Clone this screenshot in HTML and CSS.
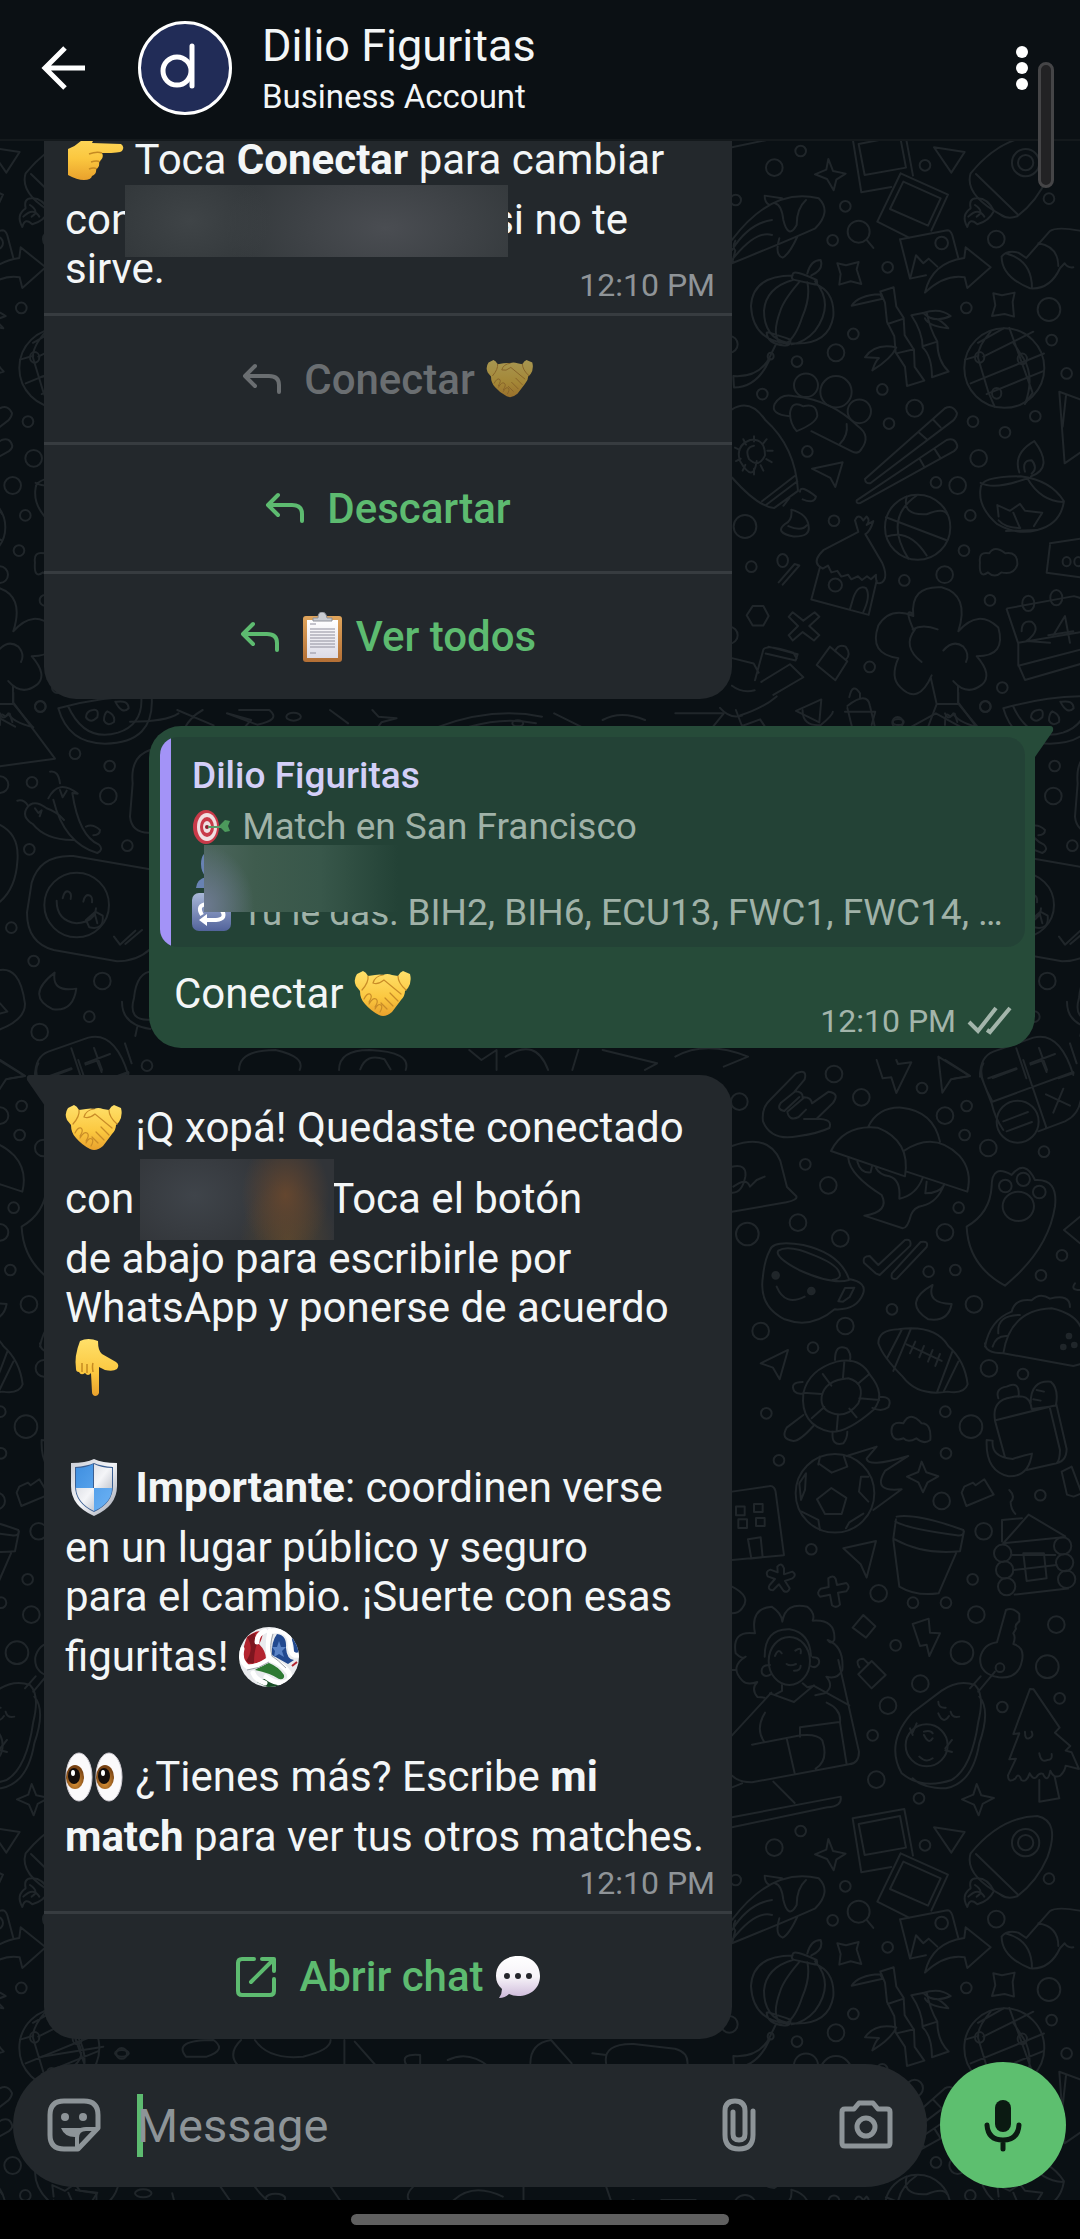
FILE: index.html
```html
<!DOCTYPE html>
<html lang="es">
<head>
<meta charset="utf-8">
<meta name="viewport" content="width=device-width, initial-scale=1">
<title>Dilio Figuritas</title>
<link rel="stylesheet" href="styles.css">
</head>
<body>
<svg class="defs" width="0" height="0" aria-hidden="true">
  <defs>
    <linearGradient id="skin" x1="0" y1="0" x2="0" y2="1"><stop offset="0" stop-color="#ffe06a"/><stop offset=".6" stop-color="#fbc73f"/><stop offset="1" stop-color="#e9a12c"/></linearGradient>
    <linearGradient id="steel" x1="0" y1="0" x2="1" y2="1"><stop offset="0" stop-color="#c9cdd6"/><stop offset=".5" stop-color="#f4f5f8"/><stop offset="1" stop-color="#9aa0ad"/></linearGradient>
    <linearGradient id="blue" x1="0" y1="0" x2="1" y2="1"><stop offset="0" stop-color="#3f8fe0"/><stop offset="1" stop-color="#6db3f5"/></linearGradient>
    <linearGradient id="wood" x1="0" y1="0" x2="0" y2="1"><stop offset="0" stop-color="#e0a55c"/><stop offset="1" stop-color="#b36f35"/></linearGradient>
    <linearGradient id="paper" x1="0" y1="0" x2="0" y2="1"><stop offset="0" stop-color="#ffffff"/><stop offset="1" stop-color="#dcdbe6"/></linearGradient>
    <linearGradient id="talk" x1="0" y1="0" x2="0" y2="1"><stop offset="0" stop-color="#ffffff"/><stop offset=".5" stop-color="#f6f3f8"/><stop offset="1" stop-color="#cdb9da"/></linearGradient>
    <linearGradient id="tile" x1="0" y1="0" x2="0" y2="1"><stop offset="0" stop-color="#a9b8d8"/><stop offset="1" stop-color="#52639b"/></linearGradient>
    <radialGradient id="iris" cx=".5" cy=".7" r=".6"><stop offset="0" stop-color="#e39a3a"/><stop offset="1" stop-color="#7a4312"/></radialGradient>
    <clipPath id="ballclip"><circle cx="30" cy="30" r="30"/></clipPath>
    <symbol id="handshake" viewBox="0 0 58 46">
      <path fill="url(#skin)" d="M3 3 9 0q3 1 5 5l7-1q5-1 8 0 4-2 9 0l6 1q2-4 5-5l7 3q2 8-2 14l-3 3q0 5-4 9L38 41q-7 6-13 3-8-4-14-11-5-5-5-13L2 15Q-1 9 3 3Z"/>
      <path fill="none" stroke="#c98c28" stroke-width="1.2" stroke-linecap="round" d="M14 5q1 6-6 14M44 5q0 7 8 14M29 4q-8 1-10 8 5 2 11-3l17 14M36 22l8 8M31 27l8 8M27 32l6 6M10 28q3-6 6-5 3 2-1 8M15 33q4-7 7-5 3 2-1 8M21 38q3-6 6-4 2 2-1 7"/>
    </symbol>
    <symbol id="reply" viewBox="0 0 40 32"><path fill="none" stroke="currentColor" stroke-width="4" stroke-linecap="round" stroke-linejoin="round" d="M13 3 3 13l10 10M4 13h23q10 0 10 9v7"/></symbol>
  </defs>
</svg>

<header class="topbar">
  <button class="icon-button back" type="button" aria-label="Volver">
    <svg width="56" height="56" viewBox="0 0 56 56"><path fill="none" stroke="#fff" stroke-width="5" d="M49 28H10M29 8 9 28l20 20"/></svg>
  </button>
  <div class="avatar">
    <svg width="88" height="88" viewBox="0 0 88 88" role="img" aria-label="Dilio"><g fill="none" stroke="#fff" stroke-width="5" stroke-linecap="round"><circle cx="36" cy="47" r="14"/><path d="M51 22v40"/></g></svg>
  </div>
  <div class="contact">
    <h1 class="contact-name">Dilio Figuritas</h1>
    <p class="contact-kind">Business Account</p>
  </div>
  <button class="icon-button menu" type="button" aria-label="Más opciones">
    <svg width="20" height="56" viewBox="0 0 20 56"><g fill="#fff"><circle cx="10" cy="12" r="6"/><circle cx="10" cy="28" r="6"/><circle cx="10" cy="44" r="6"/></g></svg>
  </button>
  <span class="scroll-thumb"></span>
</header>

<main class="screen">
  <svg class="wallpaper" aria-hidden="true">
    <defs>
      <g id="doodles">
        <g transform="translate(720 -11) scale(.3333 .3827)" class="flat">
          <ellipse class="m" cx="829" cy="285"/><ellipse class="s" cx="739" cy="465"/><ellipse class="l" cx="987" cy="469"/><ellipse class="s" cx="995" cy="549"/><ellipse class="s" cx="400" cy="533"/><ellipse class="m" cx="348" cy="582"/><ellipse class="s" cx="231" cy="605"/><ellipse class="s" cx="127" cy="690"/><ellipse class="s" cx="487" cy="678"/><ellipse class="m" cx="584" cy="727"/><ellipse class="s" cx="507" cy="767"/><ellipse class="s" cx="759" cy="762"/><ellipse class="s" cx="855" cy="790"/><ellipse class="s" cx="946" cy="748"/><ellipse class="s" cx="1040" cy="636"/><ellipse class="m" cx="776" cy="858"/><ellipse class="s" cx="648" cy="921"/><ellipse class="m" cx="713" cy="929"/><ellipse class="s" cx="751" cy="1007"/><ellipse class="s" cx="262" cy="840"/><ellipse class="s" cx="342" cy="1021"/><ellipse class="l" cx="75" cy="1036"/><ellipse class="s" cx="94" cy="1141"/><ellipse class="s" cx="732" cy="1099"/><ellipse class="s" cx="553" cy="1177"/><ellipse class="m" cx="674" cy="1162"/><ellipse class="s" cx="810" cy="1229"/><ellipse class="s" cx="449" cy="1403"/><ellipse class="s" cx="847" cy="1457"/><ellipse class="s" cx="796" cy="1507"/><ellipse class="s" cx="533" cy="1548"/><ellipse class="m" cx="28" cy="560"/><ellipse class="m" cx="28" cy="1320"/>
          <path d="M218 380q-120 0-125 80 5 90 110 98M218 392q-80 20-86 80 0 70 70 84M240 395q-50 50-60 80-25 60 0 80M262 398q10 40-15 90-20 55-50 70M285 395q60 60 0 130-30 30-70 35M285 402q60 20 55 85-15 80-135 70M218 378q0-16 72 14 5 14-8 11l-62-12q-8-5-2-13ZM140 530q0-5 72 18 0 18-20 15-50-5-52-33ZM262 375q10-35 40-35 10 25-28 40M166 563l-14 25q-30 60-112 55l2 30q70 0 108-75"/><circle cx="152" cy="591" r="9"/>
          <path d="m395 459q20-28 85-30l8 12q-20 4-93 18ZM481 422l40-11 8 50 22 30 3 45 28 38 2 45 29 36-52 14-6-50-28-38-4-42-22-38-6-50ZM503 507l48-14M532 583l50-10M435 594q30-38 94-26-15 30-72 60 10-25 20-32ZM574 484l46-8q10 45 32 77 0 50 34 78l-50 15q0-55-28-78 0-40-34-84ZM608 565l44-12M610 478q50-15 82 8-50 20-82-8ZM615 492q10 20 70 26-20-20-35-24"/>
          <ellipse cx="853" cy="622" rx="120" ry="104"/><path d="M812 527q-40 40-38 68l32 92 18 36M774 556l78-38M790 592l150-65M752 662l220-78M800 690l170-60M868 517l70 170-20 25M735 600l40-10M880 556l30 40q35 50 5 120"/><circle cx="779" cy="594" r="14"/><circle cx="907" cy="598" r="14"/><circle cx="830" cy="688" r="14"/>
          <ellipse cx="258" cy="667" rx="36" ry="31"/><ellipse cx="348" cy="684" rx="47" ry="41"/><ellipse cx="418" cy="735" rx="35" ry="31"/><path d="M210 748q-60-5-46-32 20-30 60-20 110 10 190 78 40 25 10 60-10 15-30 5l-120-52M210 740q5-35 40-18 40-10 42 25-5 20-62 40-20-20-20-47ZM380 768q5 30-20 52"/>
          <path d="M435 912l240-185q25-10 36 13 0 8-10 18l-250 165q-15 2-16-11ZM410 968l270-158q25-8 32 15 0 8-10 14L420 975q-12 2-10-7ZM596 790l24 18M640 757l22 20M598 858l16 24M644 834l18 24"/>
          <path d="M36 730q55-30 100 28 90 70 98 185l-72 45q-50-5-126-80M126 970l98-66M138 980l94-62M240 945q0-20 48 13-5 20-40 7M208 962l-18 20M102 825q-30 5-15 35 30 25 48-10 0-45-45-40-45 15-30 55 40 60 50 0M102 800v14M140 808l-12 13M158 838h-16M155 868l-16-8M130 890l-8-14M102 900v-15M68 890l8-15M48 865l14-6M45 830l14 6M70 808l8 14"/>
          <path d="M276 885l92-17-22 65-15-24ZM214 992q50 12 52 45 5 26-45 25-60-10-25-33 22-10 18-37ZM205 1035q40 15 55-2"/>
          <path d="M295 1138q-15-15 15-40l105-48-10-30q10-20 25 0l10-10q12 10 0 22l20-10q-10 28-24 34l50 74q20 40 0 52-20 10-18-20l-15 12-12-8-15 10-12-10-20 8-10-12-20 5-12-15-18 4-10-18-16 8ZM300 1142l-26 85 172 40 24-90M390 1252l10-30q15-35 38-25 15 20-8 62"/><ellipse cx="346" cy="1189" rx="20" ry="17"/>
          <ellipse cx="593" cy="1038" rx="98" ry="85"/><path d="M498 1012l182 60M560 958q-15 50 60 46 50-18 62 0M590 955q-100 60-25 165M500 1062q70-20 120 50"/>
          <path d="M782 935q0-30 120-30 90 10 130 65-10 60-80 75-60 15-120-15-60-45-50-95ZM782 922q40 20 140-12 40 60 108 62M898 895q-20-50 45-82 60 70-10 92M915 893q-10-30 20-30 20 20 0 35M836 1010l-4-30 38 15 30-18 15 18 52 5-25 35M836 1020q20 20 65 20M880 1000l20 40M858 1048l90-3"/>
          <ellipse cx="188" cy="1125" rx="16" ry="17"/><path d="M176 1182l48-48 14 4-50 50M80 1268l18-24h32l16 26-16 25H98ZM218 1260l32 22 34-22 14 12-30 24 30 24-16 14-34-22-30 22-12-14 28-24-28-24ZM780 1130q-5-30 28-24 15-22 48 0 38-5 36 30-10 28-48 20-20 16-40 0-28 18-24-26Z"/>
          <path d="M290 1398l40-48 52 38-36 50ZM345 1362q10-20 32-12 18 20 0 35M382 1505q60-40 68 0l14 52M382 1510l14 50M388 1482q10-40 32-10v14"/>
          <path d="M635 1425q-40 80-95 30-30-25-5-75-90-10-60-85 35-50 105-25-10-80 85-75 85 20 50 115 60-60 120-10 25 75-65 75 50 50 15 75-45 30-85-10M580 1305q-30-60 0-40M578 1305q30-15 75 0M605 1390q-60-40-20-85M670 1360q30-30 60-10 20 20 8 40M632 1430l18 70h64v-48M650 1500l-25 58M716 1500l55 58M675 1555q0-40 15-22l14-8 8 22"/>
          <path d="M862 1250l200-32 20 5M860 1252l35 90v55l20 40 180-45M895 1340l200-30M895 1400l200-45M905 1310q0-30 30-25 30 20-15 50l70 5M1000 1320l35-50 15 70M985 1320l75-10"/><ellipse cx="925" cy="1237" rx="18" ry="20"/><ellipse cx="1009" cy="1222" rx="18" ry="20"/>
          <path d="M990 1080l90-12M990 1085l-10 72 100 12M1018 684l62 20M1018 684l16 187 50-30M1038 695l-10 80"/><circle cx="1040" cy="1128" r="12"/><circle cx="1075" cy="1128" r="12"/>
          <path d="M130 1358q8-15 90 8l10 15M130 1358l-25 80M145 1350l88 20-6 16-90-18M36 1380l65 14 15 24M124 1442l86-46 40 34-90 46M60 1530q70-20 110-50M36 1452q30 20 68 12M228 1518l76-30-6 60ZM0 1510q30 30 66 20"/>
        </g>
        <g transform="translate(720 919) scale(.3333)">
          <circle class="m" cx="342" cy="42"/><circle class="m" cx="424" cy="112"/><circle class="m" cx="58" cy="125"/><circle class="s" cx="606" cy="84"/><circle class="m" cx="675" cy="167"/><circle class="s" cx="740" cy="138"/><circle class="s" cx="734" cy="225"/><circle class="m" cx="805" cy="264"/><circle class="s" cx="972" cy="275"/><circle class="s" cx="256" cy="313"/><circle class="m" cx="325" cy="376"/><circle class="m" cx="234" cy="488"/><circle class="l" cx="82" cy="522"/><circle class="m" cx="361" cy="535"/><circle class="s" cx="716" cy="443"/><circle class="m" cx="675" cy="517"/><circle class="s" cx="626" cy="635"/><circle class="s" cx="706" cy="630"/><circle class="s" cx="1026" cy="586"/><circle class="s" cx="963" cy="646"/><circle class="m" cx="762" cy="733"/><circle class="s" cx="516" cy="748"/><circle class="m" cx="376" cy="798"/><circle class="m" cx="122" cy="813"/><circle class="s" cx="279" cy="863"/><circle class="m" cx="807" cy="925"/><circle class="s" cx="909" cy="942"/><circle class="s" cx="139" cy="1060"/><circle class="s" cx="676" cy="1055"/><circle class="l" cx="753" cy="1100"/><circle class="s" cx="678" cy="1180"/><circle class="s" cx="177" cy="1201"/><circle class="m" cx="665" cy="1323"/><circle class="s" cx="961" cy="1306"/><circle class="m" cx="791" cy="1414"/><circle class="s" cx="274" cy="1468"/>
          <path d="M150 120l78-80q35-15 26 18l-30 36q25 0 24 18 25-2 28 18l50-35q35 5 12 35l-48 46q50 0 38 28-30 15-95 25-80 15-104-45-5-40 21-64ZM228 92l-45 36q-15 20 10 25l45-42M250 115l-48 40q5 30 34 16l22-22M252 177h50"/>
          <path d="M470 0l18 55 26-3 15 47 45-92-40 5-5-12M655-10l12 108 26-40 56-10ZM780 40l35 90q10 45 35 80M910 0l70 205M815 126l245-90M1070 10l-20-60M790 10q-20 30 25 110M955 214l80-30q45-20 50-80M818 54l72-27M932 14l34-12 14 34M978 103l72 34M1030 86l-30 72"/><circle cx="893" cy="185" r="63"/><path d="M850 184l74-28M860 214l76-28"/>
          <path d="M445 200q30-60 100-57 95 10 115 102M333 273q40-80 140-70 100 40 82 146ZM553 272q90-60 165 15 40 45 24 108L560 335M385 295q5 50 100 110 25 50-52 62l115 38q15 0 25-40 10-25 35-28 45-10 65-65M412 305q10 35 40 32l4-18M468 324q10 20 40 25 35 10 30 67 50-10 70-62M620 365l-4 35q40 0 56-24"/>
          <path d="M36 258q110-40 145 45l20 78 28 28q5 10-30 18L36 455M36 320q45-10 40 30-10 50-40 48M40 380q40-30 50 0l20-20 24-10"/>
          <path d="M740 500q70-40 75-120 0-70 60-35 40-50 70 15 70-5 60 80-20 130-150 237-110-60-115-177Z"/><circle cx="856" cy="378" r="19"/><circle cx="910" cy="358" r="20"/><circle cx="958" cy="396" r="19"/><ellipse cx="895" cy="439" rx="47" ry="44"/>
          <path d="M150 570q10-30 100-15 110 25 137 102 55 10 42 45-20 50-85 46-70 60-150 30-80-40-65-130 5-50 21-78ZM387 660q-50 15-150-30-75-40-62-58 30-20 110 15 75 30 75 60-2 10-23 13M355 724l20-40 28-1-14 28-20 14ZM170 680q25 60 84 30M432 608q-5-20 17-20l26 27 80-75q20-5 16 17l-92 88-12-5ZM516 640l86-94q25-5 18 15l-90 95q-20 5-14-16ZM638 675q-20 55 57 57-10 55-70 46-80-50 13-103Z"/><circle class="fill" cx="167" cy="646" r="10"/><circle class="fill" cx="274" cy="693" r="10"/>
          <path d="M475 850q0-40 60-42 110-15 150 50 50 45 58 115-10 30-60 22-90 15-135-45-60-60-73-100ZM545 810l-44 85M572 808l-52 125M697 875l-46 122M715 905l-44 90M560 853l105 50M586 845l-16 35M612 858l-14 34M638 870l-14 35M660 882l-14 36"/>
          <path d="M795 860q15-80 80-105 10-40 60-34 25-25 55-5 60-15 60 25M850 880q20-130 145-135 90 20 95 85M795 850q0 30 55 30l210 38 20-5M835 820q-5-55 65-55M818 860q10-35 45-32"/><circle class="fill" cx="1047" cy="828" r="7"/><circle class="fill" cx="1030" cy="861" r="7"/><circle class="fill" cx="1063" cy="855" r="7"/>
          <path d="M122 910l82-40-25 88-20-35Z"/><path d="M250 1000q15-70 100-95 70-15 100 40 50 60 10 105-80 70-130 65-90-20-80-115ZM305 1010q10-50 80-55 55 15 30 75-30 40-70 32-45-10-40-52ZM345 900q0-50 35-35 15 15 10 38M248 966q-40 0-25 28 10 10 25 7M480 1010q40 0 25 32-20 15-48 2M250 1065l-50 38q-20 35 20 40 20 0 60-45M338 1115q-5 45 32 35 12-15 12-35M373 905l-4 48M448 942l-35 30M478 1020l-60-5M410 1072l-22-26M350 1112l4-48M275 1075l38-34M250 998l55 4M308 942l26 35"/>
          <path d="M515 1120q-5-38 35-30 20-40 55 0 30 0 26 50-20 15-42-5-25 15-38 0-30 12-36-15ZM825 1080q-10-60 50-68 55-15 60 35l75-10 30 130q0 40-40 45l-80 18M830 1080l180-45M825 1082l30 110M990 1045l30 125q0 30-10 40M835 1015q-10-30 25-35 40-20 36 30M932 1030q0-70 60-65 25 20 16 70M950 990l22 5M940 1018l22 4M800 1140l18 2q-5 50 60 55 30-10 58-16-10 70-70 68-70-15-66-109Z"/>
          <circle cx="345" cy="1300" r="118"/><path d="M334 1284l45 30-14 48h-50l-24-44ZM295 1210l40 28 47-18-10-30M300 1190l-5 24M258 1240l-20 30 5 50 12-30ZM445 1250h-22l-6 45 28 30M245 1355l50 25 5 30M378 1405l10-18 42-26M380 1188l90-28-30 35q0 30 125-7l-70 45q-40 65 50 55l-85 62M605 1205l14 32 36 12-32 18-14 30-14-30-34-17 34-14ZM725 1298l8-18 26-12 8 8 26-18 28 46-82 34Z"/>
          <path d="M36 1295l110-16q20-5 22 25l24 182-156 14M48 1340h26v26H48ZM102 1332h26v24h-26ZM55 1378h26v26H55ZM108 1374h26v24h-26ZM84 1438l38-6 6 60-34 4ZM370 1465l98-22-28 110-18-40ZM530 1370q60-10 200 40 5 20-20 16-150-20-184-42M528 1378l-8 58q90 50 200 38l12-60M520 1440l18 140q50 30 118 20l52-120M868 1290q20 20 4 36 0 20 14 36M850 1450l76-86 110 65M846 1445v-65l60-5M850 1450l180-18"/>
          <circle cx="848" cy="1480" r="26"/><circle cx="1028" cy="1458" r="26"/><circle cx="854" cy="1530" r="26"/><circle cx="1034" cy="1508" r="26"/><circle cx="860" cy="1580" r="26"/><circle cx="1040" cy="1558" r="26"/><path d="M876 1485h130M880 1530l130-15M884 1604l160-18M910 1480h62l8 75-60 8ZM1025 1235l30-15 30 80-24 10-20-6ZM1080 470l-48 40 48 40M1080 690q-30 0-15-20"/>
        </g>
        <g transform="translate(720 1409) scale(.3333)">
          <circle class="m" cx="476" cy="130"/><circle class="s" cx="579" cy="158"/><circle class="s" cx="678" cy="158"/><circle class="s" cx="758" cy="88"/><circle class="m" cx="769" cy="194"/><circle class="m" cx="1009" cy="224"/><circle class="s" cx="527" cy="286"/><circle class="l" cx="726" cy="308"/><circle class="l" cx="982" cy="350"/><circle class="m" cx="601" cy="401"/><circle class="m" cx="504" cy="467"/><circle class="s" cx="1019" cy="445"/><circle class="s" cx="847" cy="471"/><circle class="s" cx="458" cy="556"/><circle class="m" cx="469" cy="689"/><circle class="s" cx="597" cy="745"/><circle class="s" cx="242" cy="843"/><circle class="m" cx="163" cy="893"/><circle class="s" cx="615" cy="886"/><circle class="s" cx="47" cy="990"/><circle class="s" cx="376" cy="1009"/><circle class="s" cx="338" cy="1111"/><circle class="s" cx="503" cy="1192"/><circle class="s" cx="987" cy="986"/>
          <path d="M172 50q12-15 20 5v18l25-8q15 10 0 20l-22 8 14 22q-5 15-18 8l-14-20-18 18q-18-2-10-16l16-18-22-8q-8-15 8-20l22 8ZM325 85q15-12 22 2l4 18 28-6q14 10 0 25l-25 4 6 36q-12 12-24 2l-6-32-30 6q-12-12 2-24l24-5ZM36 110q60 30 30 65-10 15-30 15M430 195l36 34-28 34-40-30ZM455 333l42 42-42 40-40-42ZM418 352q-15-25 12-26l16 16M578 222l48-16 4 42 30 2-32 68-8-34-20 4Z"/>
          <path d="M105 250q-15-75 50-80 30 20 32 45 10-60 75-45 25 20 16 42 70-5 65 58-10 15-20 0 50 20 44 90-15 30-48 20 25 30-5 50l-28 6M105 250q-70-10-58 60 20 20 30 10-50 30-10 72 15 15 45 4-20 20 0 45l22 2M36 360h12"/><ellipse cx="208" cy="333" rx="62" ry="72"/><path d="M134 320q0-85 75-82 60 10 64 80M150 345q-30 0-24 25 10 15 28 2M278 322q25 0 18 20-10 15-24 6M165 318q10-25 20-8M226 302q20-15 16 8M200 342q10 8 28 0M222 362q20 0 20-15M186 405v18l-22 12M248 400l14 12 20-5M150 430l72 26 60-50M36 556l118-128M282 408l106 58M355 330l62 275q0 35-30 38L96 697q-40 0-60-20M320 458q45 20 40 60l20 125M135 488q-30 50-2 88M96 584l146-28q50-5 65 15 20 60-20 85M200 565l24 105M240 560v-28l118-16M36 712l30-12M160 695l64 64M36 802l326-62q5 30-40 32L36 832"/>
          <path d="M765 405q30 30 10 110-20 140-80 175-90 30-150-20-50-90 30-180l90-68q50-35 100-17ZM778 440q35 40 0 140-20 120-100 135-70 0-100-30"/><circle cx="620" cy="586" r="63"/><path d="M655 455q0 20 22 18M655 490q15 35 32 8M692 485q5 20 26 15M612 545q20-5 26 5M612 555q15 30 26 10M598 620q20 20 40 5M590 520l-12 28M570 535l8 20M696 570l-20 25M696 606l-20-5M750 415l32-36M775 425l50-60M858 180q20-10 40 12v22q-15 10-10 22l-8 14q8 10 0 32 35 10 26 50-10 55-70 50-60-10-55-60 10-40 50-45Z"/><circle cx="840" cy="353" r="13"/>
          <path d="M930 417l-50 135 18-2-30 78 20-2-24 50q0 25 22 10 10-20 18 4 15 10 25-20 10 20 20 12 10-15 20-10 15 30 22-10 10 25 30 15 15-15 16-30l40 10-22-50-18-5 14-14-46-40 14-15-78-115ZM958 690v65l60-10-14-65M915 545q0 25 12 20 15-5 8-20M958 610q5 30 25 20 15 0 12-18"/>
          <path d="M398 805l155-28 26 140M398 805l26 162 90-16M416 822l124-24 18 95-124 22ZM542 910l142 64-50 108M542 910l-70 145 95 48M550 935l112 50-38 82-114-50ZM642 832l92 14-40 62ZM325 867l14 36 38 8-28 18-8 32-20-34-36-14 34-14ZM770 702l14 34 38 8-34 18-12 34-14-32-36-16 34-14Z"/>
          <path d="M752 910q90-110 200-112 70 15 30 125-30 70-90 116-30 10-50-5-110-60-90-124ZM768 912l124 120"/><circle cx="917" cy="878" r="41"/><circle cx="917" cy="878" r="23"/><path d="M770 985q-25 0-18 30-30 20-10 56 8-30 30-8 35-10 50-40-20-40-52-38ZM765 1005q30 20 5 35M745 1040q30-30 48 0"/>
          <path d="M36 1110q120-160 260-125 40 40-10 90-90 40-250 105l10-38q-10-10 0-30M186 985l-52-8q0 20 14 28M165 1000q20 5 25 50 15 60 40 15 0-50 28-75M178 1105q-15 50 10 58 20-10 45-65M36 1170q70-90 120-75M36 1140q50-80 120-90"/><circle cx="416" cy="1085" r="33"/><path d="M440 1110l20 24M352 1180l26 6 38-10-6 22 14 44-32-8-34 10 4-32ZM820 1270l26 6 38-8-6 28 4 44-28-8-38 6 10-32Z"/>
          <path d="M542 1108l140-27q10 0 15 15l18 68M540 1108l30 118 48-10M572 1220l16-64 22 24 16-14 26 24"/><circle cx="665" cy="1119" r="19"/><path d="M615 1268q20-90 118-104l4-32 75 60-70 62-8-32q-60-10-119 46ZM845 1160q15-20 50-12l24 16 70-80q20-15 90-2M845 1160q0 60 85 95 60 5 90-60l14-15q10 15 26 12M955 1120q60 10 60 68M856 1150q80 20 80 104"/>
        </g>
        <g transform="translate(945 549) scale(.3333)">
          <circle class="s" cx="225" cy="191"/><circle class="s" cx="329" cy="228"/><circle class="s" cx="96" cy="277"/><circle class="m" cx="325" cy="318"/><circle class="m" cx="0" cy="284"/><circle class="s" cx="382" cy="467"/><circle class="s" cx="88" cy="478"/><circle class="s" cx="34" cy="713"/><circle class="s" cx="101" cy="813"/><circle class="m" cx="307" cy="873"/><circle class="s" cx="268" cy="980"/><circle class="m" cx="119" cy="1026"/><circle class="s" cx="441" cy="1127"/><circle class="s" cx="121" cy="49"/>
          <path d="M175 55q140-40 280-36 10 140-140 142-110 0-140-106ZM204 48q50 110 150 80 75-25 70-105M278 60q20-5 14 22-20 20-34 0 0-18 20-22ZM322 64q25 10 20 32-20 15-30-5 0-20 10-27ZM350 35q35-5 36 20-20 20-40-20ZM-10 230l175-24L40 38V8M0 70q10 25 25 0 10 25 75 42"/>
          <path d="M150 245q25-5 30 35M145 325q30-60 88-14l-16-2q20 130 80 155 15 15-5 25-100-30-132-160M180 300l8 22 12-20M52 332q20-5 32 15M95 400q-30-20-15-45 20-30 60 0 30 10 52 35M98 402q40 50 125 48M105 355l10 14 10-8-6 18M258 410q20-10 42 10 0 15-20 16M0 405q60 30 52 110-5 80-52 120"/>
          <path d="M450 180q-60 20-52 100l-8 100q5 50 60 48M450 538l-230-40q-100-5-125 80l-14 90q0 90 80 112l190 34q60 0 99-36M342 740l18 24 46-42M376 762l50-42"/><circle cx="230" cy="645" r="97"/><path d="M188 625q5-25 18-20 10 5 6 22M250 635q5-25 20-18 8 5 6 20M170 632q0 60 60 68 55-5 58-45M258 690l28-25 22 12q5 45-40 35ZM284 670l8 30"/>
          <path d="M164 848q-10 60 65 48-10 70-70 62-85-40 5-110ZM-10 842q70-20 85 100 0 50-85 80M0 940l22 25-22 6M460 844q-50 0-58 80-20 70 50 65M366 935q0 70 85 82M412 1010l-6 28M105 1160q0-60 40-75l120-42q80-20 120 112M214 1075l30 90M130 1165l84-30M256 1120l74-28M282 1074l24 66M340 1165l46-16M0 1110l75 48-48 8"/>
        </g>
        <g transform="translate(130 569) scale(.6059 .3333)" class="strip">
          <path d="M0 35q60 0 80-25M78 0l60 46M120 0q-20 20-30 55M160 10l40 20-10 20M180 0h50q20 30-20 44l-50-34M330 0l30 40M400 0l10 20 30 5-25 12-8 20M510 50q90-60 170-30M560 50q60-30 110-10M700 10l50 45M780 30q30-30 70 0M900 10h80l-20 45M1000 0l10 48 30-20 10 28M1110 0q0 50 30 45 20-30 20-40M1180 5h50l-6 40M1290 50l40-40 40 40"/>
          <circle cx="270" cy="20" r="12"/><circle cx="640" cy="40" r="9"/><circle cx="1268" cy="36" r="9"/>
          <path d="M180 1080q0-60 60-60 50 20 40 60M345 1080q0-60 50-60 70 5 60 60M380 1078q10-50 40-30l10 30M560 1020l20 30 25-30v60M620 1040q50-60 70 40M730 1080l10-60M780 1020l90 40-20 20M900 1040q50-50 120 0l-40 30"/>
        </g>
        <g transform="translate(0 219) scale(.6888 .3333)" class="strip">
          <path d="M110 0q20 50-10 90M60 50l90-30M270 50q-20-50 40-50 20 30-10 50ZM350 0q-20 40-5 75M370 0q20 60 70 50 40-20 40-50M500 0v75M515 5l30 70M590 75q-10-35 20-30v30M650 60q30-30 60 20M770 70q0-60 30-70l30 70M860 40l20 5M880 70q-5-60 40-58l60 14q20 10 18 50M110 450l30 10v40M250 460l5 40M320 440l20 60M370 440q30 90 70 50M480 440l20 60M600 440q-20 40 10 60M650 500q30-80 80-30M760 440v60M880 440l10 60 30-20M960 480h50"/>
          <circle cx="177" cy="40" r="10"/><circle cx="208" cy="460" r="12"/><circle cx="400" cy="475" r="14"/>
        </g>
      </g>
    </defs>
    <use href="#doodles" y="-1680"/><use href="#doodles" x="-945" y="-1680"/>
    <use href="#doodles"/><use href="#doodles" x="-945"/>
    <use href="#doodles" y="1680"/><use href="#doodles" x="-945" y="1680"/>
  </svg>

  <div class="chat">
    <article class="bubble incoming">
      <div class="body">
        <p class="text"><svg class="emoji" viewBox="0 0 60 71" role="img" aria-label="señala a la derecha"><path fill="url(#skin)" d="M3 25q8-3 14-9l5-11q5-6 8 0 1 6-3 14l29 1q4 3 1 7-2 2-18 2h-2q2 4-1 7l-2 2q1 5-3 7 1 5-4 7-1 4-8 4Q12 56 3 51Z"/><path fill="none" stroke="#c58a22" stroke-width="1.5" d="M24 30q8-3 13-1M26 38q6-2 9 0M24 45q5-2 8 0"/></svg> Toca <strong>Conectar</strong> para cambiar<br>con<span class="redacted redacted-name"></span>si no te<br>sirve.</p>
        <time class="time" datetime="12:10">12:10 PM</time>
      </div>
      <button class="action" type="button" disabled>
        <svg class="reply" width="40" height="32"><use href="#reply"/></svg>
        <span>Conectar</span>
        <svg class="mini" width="48" height="38"><use href="#handshake"/></svg>
      </button>
      <button class="action" type="button">
        <svg class="reply" width="40" height="32"><use href="#reply"/></svg>
        <span>Descartar</span>
      </button>
      <button class="action" type="button">
        <svg class="reply" width="40" height="32"><use href="#reply"/></svg>
        <svg class="mini lead" width="42" height="50" viewBox="0 0 42 50"><rect x="1" y="4" width="39" height="46" rx="3" fill="url(#wood)"/><path fill="url(#paper)" d="M5 8h31v38H5Z"/><path fill="#c9ccd2" stroke="#8d9098" d="M11 9V6h5q0-6 4-6t5 6h5v3Z"/><path stroke="#8f8e9c" stroke-width="1" d="M8 12h6M8 17h25M8 20h25M8 23h25M8 26h25M8 29h25M8 32h25M8 35h25M8 41h6"/></svg>
        <span>Ver todos</span>
      </button>
    </article>

    <article class="bubble outgoing">
      <svg class="tail tail-right" width="20" height="32" viewBox="0 0 20 32"><path fill="#264b39" d="M0 0h16q4 0 3 5L1 31H0Z"/></svg>
      <blockquote class="quote">
        <p class="quote-name">Dilio Figuritas</p>
        <p class="quote-line"><svg class="quote-emoji" viewBox="0 0 41 40" role="img" aria-label="diana"><ellipse cx="14" cy="20" rx="13" ry="17" fill="#c93a49"/><ellipse cx="15" cy="20" rx="10" ry="14" fill="#f0dfe2"/><ellipse cx="15" cy="20" rx="7" ry="10" fill="#c93a49"/><ellipse cx="15" cy="20" rx="4" ry="6" fill="#f0dfe2"/><circle cx="15" cy="20" r="2" fill="#8c1f2c"/><path stroke="#5b9a68" stroke-width="2" d="M16 20h16"/><path fill="#4c9a5c" d="m27 19 6-6 5 1-2 5 2 5-5 1Z"/></svg> Match en San Francisco</p>
        <p class="quote-line"><svg class="quote-emoji" viewBox="0 0 41 40" role="img" aria-label="persona"><path fill="#6882b3" d="M20 1q12 0 12 13 0 8-5 13 9 2 10 11H4q1-9 10-11-5-5-5-13Q9 1 20 1Z"/></svg><span class="redacted redacted-quote"></span></p>
        <p class="quote-line"><svg class="quote-emoji" viewBox="0 0 41 40" role="img" aria-label="repetir"><rect x="0" y="0" width="39" height="38" rx="7" fill="url(#tile)"/><path fill="none" stroke="#fff" stroke-width="4" d="M10 22q-6-10 5-11h12M29 16q7 10-5 11H13"/><path fill="#fff" d="M25 5v12l8-6ZM15 21v12l-8-6Z"/></svg> Tú le das: BIH2, BIH6, ECU13, FWC1, FWC14, …</p>
      </blockquote>
      <div class="body">
        <p class="text">Conectar <svg class="emoji" viewBox="0 0 60 71" role="img" aria-label="apretón de manos"><use href="#handshake" x="0" y="13" width="58" height="46"/></svg></p>
        <time class="time" datetime="12:10">12:10 PM
          <svg width="46" height="30" viewBox="0 0 46 30" role="img" aria-label="entregado"><path fill="none" stroke="currentColor" stroke-width="4" d="m2 16 9 9L29 2M20 24l3 2L43 2"/></svg>
        </time>
      </div>
    </article>

    <article class="bubble incoming tall">
      <svg class="tail tail-left" width="20" height="32" viewBox="0 0 20 32"><path fill="#23282c" d="M20 0H4Q0 0 1 5l18 26h1Z"/></svg>
      <div class="body">
        <p class="text"><svg class="emoji" viewBox="0 0 60 71" role="img" aria-label="apretón de manos"><use href="#handshake" x="0" y="13" width="58" height="46"/></svg> ¡Q xopá! Quedaste conectado<br>con<span class="redacted redacted-person"></span>Toca el botón<br>de abajo para escribirle por<br>WhatsApp y ponerse de acuerdo<br><svg class="emoji" viewBox="0 0 60 71" role="img" aria-label="señala abajo"><path fill="url(#skin)" d="M15 9q8-4 18 0 0 10 4 13l14 8q4 3 1 7-4 3-12 1l-6-3v26q-1 3-4 3-3-1-3-4l-1-19q-3 4-6 0-4 3-6-1-3 0-3-3Q9 24 15 9Z"/><path fill="none" stroke="#c58a22" stroke-width="1.5" d="M17 40v-9M22 41v-9M28 40q-1-6 0-9"/></svg><br><br><svg class="emoji" viewBox="0 0 60 71" role="img" aria-label="escudo"><path fill="url(#steel)" d="M29 7q8 4 23 4v23q0 20-23 30Q6 54 6 34V11q15 0 23-4Z"/><path fill="#3a5f93" d="M29 11q7 3 19 4v19q0 17-19 26Q10 51 10 34V15q12-1 19-4Z"/><path fill="url(#blue)" d="M28 12v24H11V16q10 0 17-4ZM29 36h18q0 15-18 23Z"/><path fill="url(#steel)" d="M29 12q8 4 18 4v20H29ZM11 36h18v23Q12 51 11 36Z"/></svg> <strong>Importante</strong>: coordinen verse<br>en un lugar público y seguro<br>para el cambio. ¡Suerte con esas<br>figuritas! <svg class="emoji" viewBox="0 0 60 71" role="img" aria-label="balón"><g transform="translate(0 6)" clip-path="url(#ballclip)"><path fill="#e9ebee" d="M0 0h60v60H0Z"/><path fill="#b3242f" d="M8 10q10-8 16-5-1 8-4 12 7 7 7 15-8 5-19 6-8-8 0-28Z"/><path fill="#7d161f" d="M8 10q8 12-1 24 3 3 8 2 0-12 3-19-4-8-1-11-5 1-9 4Z"/><path fill="#22498f" d="M38 7q10 1 9 14 1 12 8 12l-6 4-16-9Q32 15 38 7Z"/><path fill="#22498f" d="M55 10q6 8 4 18l-4-3q0-8-3-13Z"/><path fill="#5a83c6" d="m40 14 2 6h5l-4 4 2 6-5-3-5 3 1-6-3-4h5Z"/><path fill="#2e7a33" d="M30 36q10 4 15 12 1 5-5 4-9-6-24-9 6-5 14-7Z"/><path fill="#184d26" d="M18 55q10-8 24 4l-10 3Z"/><path fill="none" stroke="#fff" stroke-width="5" stroke-linecap="round" d="M31 4q-3 12-1 26M30 32Q20 40 9 40 0 34 3 22M30 32q13 4 20 14 3 9-7 10-8 0-16-6M34 4q16-2 17 12 0 14 8 12M26 4q-8 3-8 11M14 46q2 6 12 10"/><path fill="none" stroke="#9ea3ab" stroke-width="1" d="M34 7q-4 12-1 22 6 4 14 12M8 43q12-1 22-8"/><path stroke="#b3242f" stroke-width="2" d="m53 39 5-4"/></g></svg><br><br><svg class="emoji" viewBox="0 0 60 71" role="img" aria-label="ojos"><g fill="#fbfafb" stroke="#cfcbd2"><ellipse cx="14" cy="36" rx="13" ry="24"/><ellipse cx="44" cy="36" rx="13" ry="24"/></g><g fill="url(#iris)"><ellipse cx="10" cy="36" rx="9" ry="12"/><ellipse cx="40" cy="36" rx="9" ry="12"/></g><g fill="#140d0a"><ellipse cx="9" cy="35" rx="6" ry="8"/><ellipse cx="39" cy="35" rx="6" ry="8"/></g><g fill="#fff"><ellipse cx="8" cy="32" rx="2" ry="3"/><ellipse cx="38" cy="32" rx="2" ry="3"/></g></svg> ¿Tienes más? Escribe <strong>mi<br>match</strong> para ver tus otros matches.</p>
        <time class="time" datetime="12:10">12:10 PM</time>
      </div>
      <button class="action" type="button">
        <svg class="reply" width="42" height="42" viewBox="0 0 42 42"><path fill="none" stroke="currentColor" stroke-width="4" stroke-linecap="round" stroke-linejoin="round" d="M19 3H7Q3 3 3 7v28q0 4 4 4h28q4 0 4-4V23M27 3h12v12M38 4 16 26"/></svg>
        <span>Abrir chat</span>
        <svg class="mini" width="46" height="44" viewBox="0 0 46 44"><path fill="url(#talk)" d="M23 1c13 0 22 8 22 20s-9 20-22 20q-5 0-9-2-4 4-10 4 3-4 3-9Q1 29 1 21C1 9 10 1 23 1Z"/><g fill="#25262b"><circle cx="12" cy="21" r="3"/><circle cx="23" cy="21" r="3"/><circle cx="34" cy="21" r="3"/></g></svg>
      </button>
    </article>
  </div>

  <form class="composer">
    <div class="field">
      <button class="icon-button" type="button" aria-label="Stickers">
        <svg width="54" height="54" viewBox="0 0 54 54"><path fill="none" stroke="currentColor" stroke-width="5" stroke-linejoin="round" d="M17 3h20q14 0 14 14v13L31 51H17Q3 51 3 37V17Q3 3 17 3Z"/><path fill="none" stroke="currentColor" stroke-width="4" d="M30 50V40q0-9 9-9h12"/><circle cx="18" cy="19" r="4" fill="currentColor"/><circle cx="36" cy="19" r="4" fill="currentColor"/><path fill="currentColor" d="M14 30h25q-8 1-9 9-12 1-16-9Z"/></svg>
      </button>
      <span class="caret"></span>
      <input class="message-input" type="text" placeholder="Message" aria-label="Message">
      <button class="icon-button" type="button" aria-label="Adjuntar">
        <svg width="54" height="54" viewBox="0 0 54 54"><path fill="none" stroke="currentColor" stroke-width="5" stroke-linecap="round" d="M42 13v24q0 14-14 14T14 37V13q0-10 10-10t10 10v23q0 6-6 6t-6-6V14"/></svg>
      </button>
      <button class="icon-button" type="button" aria-label="Cámara">
        <svg width="54" height="54" viewBox="0 0 54 54"><path fill="none" stroke="currentColor" stroke-width="5" stroke-linejoin="round" d="M6 11h9l5-6h14l5 6h9q3 0 3 3v31q0 3-3 3H6q-3 0-3-3V14q0-3 3-3Z"/><circle cx="27" cy="29" r="9" fill="none" stroke="currentColor" stroke-width="5"/></svg>
      </button>
    </div>
    <button class="mic" type="button" aria-label="Grabar audio">
      <svg width="54" height="54" viewBox="0 0 54 54"><rect x="19" y="2" width="16" height="32" rx="8" fill="#0b1a12"/><path fill="none" stroke="#0b1a12" stroke-width="5" stroke-linecap="round" d="M11 27q1 15 16 15t16-15M27 43v8"/></svg>
    </button>
  </form>
</main>

<footer class="navbar"><span class="home-pill"></span></footer>
</body>
</html>
```
FILE: styles.css
```css
* {
  box-sizing: border-box;
}

body {
  margin: 0;
  height: 100vh;
  display: flex;
  flex-direction: column;
  overflow: hidden;
  background: #0a1014;
  color: #f3f6f7;
  font-family: Roboto, "Noto Sans", sans-serif;
}

h1, p, blockquote {
  margin: 0;
  font-weight: 400;
}

button {
  border: 0;
  padding: 0;
  background: none;
  color: inherit;
  font: inherit;
}

svg {
  flex: none;
}

.defs {
  position: absolute;
}

.icon-button {
  display: flex;
}

/* Top bar */
.topbar {
  position: relative;
  z-index: 3;
  flex: none;
  display: flex;
  align-items: center;
  height: 141px;
  padding: 0 48px 3px 36px;
  border-bottom: 2px solid #14191c;
  background: #0b1014;
}

.avatar {
  margin-left: 46px;
  width: 94px;
  height: 94px;
  border: 3px solid #fff;
  border-radius: 50%;
  background: #212c57;
}

.contact {
  flex: 1;
  min-width: 0;
  margin-left: 30px;
}

.contact-name {
  font-size: 45px;
  line-height: 52px;
}

.contact-kind {
  margin-top: 5px;
  font-size: 33px;
  line-height: 40px;
}

.scroll-thumb {
  position: absolute;
  top: 62px;
  right: 26px;
  width: 16px;
  height: 126px;
  border: 3px solid #454547;
  border-radius: 8px;
  background: #222224;
}

/* Conversation */
.screen {
  position: relative;
  flex: 1;
  min-height: 0;
  display: flex;
  flex-direction: column;
  overflow: hidden;
}

.wallpaper {
  position: absolute;
  inset: 0;
  width: 100%;
  height: 100%;
  fill: none;
  stroke: #20262a;
  stroke-width: 2;
  stroke-linecap: round;
  stroke-linejoin: round;
}

.wallpaper path,
.wallpaper circle,
.wallpaper ellipse {
  vector-effect: non-scaling-stroke;
}

.wallpaper .fill { fill: #20262a; }
.wallpaper circle.s { r: 16px; }
.wallpaper circle.m { r: 25px; }
.wallpaper circle.l { r: 34px; }
.wallpaper ellipse.s { rx: 16px; ry: 14px; }
.wallpaper ellipse.m { rx: 25px; ry: 22px; }
.wallpaper ellipse.l { rx: 34px; ry: 30px; }

.chat {
  position: relative;
  flex: 1;
  min-height: 0;
  display: flex;
  flex-direction: column;
  justify-content: flex-end;
  gap: 27px;
  padding: 0 45px 0 44px;
}

.bubble {
  position: relative;
  flex: none;
  width: 100%;
  border-radius: 32px;
}

.incoming {
  max-width: 688px;
  background: #23282c;
}

.outgoing {
  align-self: flex-end;
  max-width: 886px;
  border-top-right-radius: 0;
  background: #264b39;
  padding-top: 11px;
}

.tall {
  border-top-left-radius: 0;
}

.tail {
  position: absolute;
  top: 0;
}

.tail-left { right: 100%; margin-right: -2px; }
.tail-right { left: 100%; margin-left: -1px; }

.body {
  display: grid;
  padding: 17px 17px 8px 21px;
}

.outgoing .body {
  padding: 11px 22px 7px 25px;
}

.text {
  grid-area: 1 / 1;
  padding-bottom: 12px;
  font-size: 42px;
  line-height: 49px;
  white-space: nowrap;
}

.tall .text {
  padding-bottom: 42px;
}

.text strong {
  font-weight: 700;
}

.emoji {
  width: 60px;
  height: 71px;
  vertical-align: -21px;
}

.time {
  grid-area: 1 / 1;
  align-self: end;
  justify-self: end;
  display: flex;
  align-items: center;
  gap: 11px;
  font-size: 32px;
  line-height: 40px;
  color: #8f9498;
}

.outgoing .time {
  color: #a3b5ab;
}

.redacted {
  position: relative;
  z-index: 1;
  display: inline-block;
}

.redacted-name {
  width: 383px;
  height: 72px;
  margin: -10px -16px -13px -9px;
  vertical-align: -10px;
  background:
    radial-gradient(ellipse 80px 60px at 17% 50%, #3f4447, transparent),
    radial-gradient(ellipse 160px 90px at 68% 60%, #4a4d52, transparent),
    #33383b;
}

.redacted-person {
  width: 194px;
  height: 81px;
  margin: -4px -5px -6px 6px;
  vertical-align: -21px;
  background:
    radial-gradient(ellipse 44px 60px at 75% 45%, #64462f, transparent),
    radial-gradient(ellipse 48px 60px at 76% 100%, #54452f, transparent),
    radial-gradient(ellipse 90px 70px at 28% 45%, #3f444a, transparent),
    #313438;
}

.redacted-quote {
  width: 194px;
  height: 67px;
  margin: -5px 0 -22px -29px;
  vertical-align: -8px;
  background:
    radial-gradient(ellipse 50px 60px at 0 90%, #6d7a91, transparent),
    linear-gradient(90deg, #4d665e, #3f5c4e 26%, #38574a 60%, #234236);
}

.quote {
  margin: 0 10px 0 11px;
  padding: 17px 12px 13px 32px;
  border-radius: 18px;
  background: linear-gradient(90deg, #a393f7 11px, #234236 11px);
  font-size: 37px;
  line-height: 43px;
  color: #a0b2a8;
}

.quote p {
  white-space: nowrap;
}

.quote .quote-name {
  margin-bottom: 8px;
  font-weight: 500;
  color: #d3cff8;
}

.quote-emoji {
  width: 41px;
  height: 40px;
  vertical-align: -8px;
}

.action {
  display: flex;
  align-items: center;
  justify-content: center;
  width: 100%;
  height: 129px;
  border-top: 3px solid #373c40;
  font-size: 42px;
  font-weight: 500;
  color: #5dbb70;
}

.action:last-child {
  height: 128px;
}

.action:disabled {
  color: #6a6e71;
}

.action:disabled .mini {
  opacity: .6;
}

.reply { margin-right: 22px; }
.mini { margin-left: 11px; }
.mini.lead { margin: 0 12px 0 0; }

/* Composer */
.composer {
  position: relative;
  flex: none;
  display: flex;
  align-items: center;
  gap: 13px;
  padding: 23px 14px 12px 13px;
}

.field {
  flex: 1;
  min-width: 0;
  display: flex;
  align-items: center;
  height: 123px;
  padding: 0 34px 0 34px;
  border-radius: 62px;
  background: #23282c;
  color: #8d9498;
}

.field .icon-button + .icon-button {
  margin-left: 74px;
}

.caret {
  width: 6px;
  height: 63px;
  margin-left: 36px;
  background: #5dbb70;
}

.message-input {
  flex: 1;
  min-width: 0;
  border: 0;
  outline: 0;
  padding: 0;
  margin-left: -6px;
  background: none;
  color: #f3f6f7;
  font: inherit;
  font-size: 47px;
}

.message-input::placeholder {
  color: #8d9498;
  opacity: 1;
}

.mic {
  flex: none;
  display: flex;
  align-items: center;
  justify-content: center;
  width: 126px;
  height: 126px;
  border-radius: 50%;
  background: #5dbf6f;
}

.navbar {
  flex: none;
  display: flex;
  align-items: center;
  justify-content: center;
  height: 39px;
  background: #000;
}

.home-pill {
  width: 35%;
  height: 11px;
  border-radius: 6px;
  background: #606060;
}
```
